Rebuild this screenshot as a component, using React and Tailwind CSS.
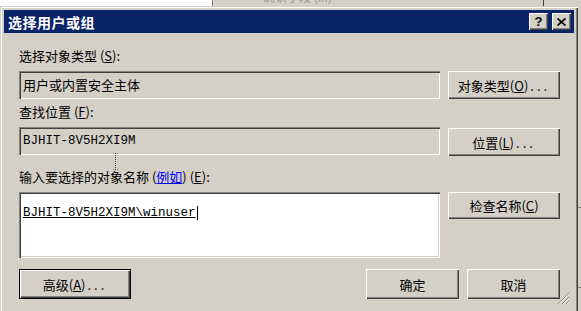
import React from 'react';

const raised =
  'bg-[#d4d0c8] shadow-[inset_1px_1px_0_#ffffff,inset_-1px_-1px_0_#404040,inset_-2px_-2px_0_#808080]';
const sunken =
  'shadow-[inset_1px_1px_0_#808080,inset_2px_2px_0_#404040,inset_-1px_-1px_0_#ffffff,inset_-2px_-2px_0_#d4d0c8]';

const Btn = ({ children, className = '' }) => (
  <button
    className={`${raised} flex items-center justify-center text-[13px] leading-[15px] text-black ${className}`}
  >
    {children}
  </button>
);

const Acc = ({ k }) => (
  <span>
    (<span className="underline">{k}</span>)
  </span>
);

const Dots = () => <span className="tracking-[3px] pl-[2px]">...</span>;

const App = () => {
  return (
    <div className="w-[581px] h-[311px] overflow-hidden bg-[#d4d0c8] font-['Noto_Sans_CJK_SC',sans-serif] text-black select-none">
      {/* window behind the dialog */}
      <div className="flex h-[6px] overflow-hidden">
        <div className="w-[212px] bg-white" />
        <div className="w-px bg-[#808080]" />
        <div className="relative flex-1 bg-[#d4d0c8] overflow-hidden">
          <div className="absolute left-[50px] top-[-10px] text-[12px] leading-[14px] text-[#9a9a9a]">确认字段 (...)</div>
          <div className="absolute left-[330px] top-0 h-full w-px bg-[#404040]" />
        </div>
      </div>

      <div className="flex h-[305px]">
        {/* dialog */}
        <div className="w-[578px] h-[320px] bg-[#d4d0c8] p-[2px] shadow-[inset_1px_1px_0_#d4d0c8,inset_2px_2px_0_#ffffff,inset_-1px_-1px_0_#404040,inset_-2px_-2px_0_#808080]">
          <div className="p-[2px] h-full flex flex-col">
            {/* title bar */}
            <div className="h-[23px] bg-[#0a246a] flex items-center pl-[4px] pr-[3px]">
              <span className="text-white font-bold text-[14px] leading-[16px] tracking-[0.5px]">选择用户或组</span>
              <div className="ml-auto flex gap-[4px]">
                <div className={`${raised} w-[19px] h-[17px] flex items-center justify-center`}>
                  <span className="font-['Liberation_Sans',sans-serif] font-bold text-[13px] leading-none">?</span>
                </div>
                <div className={`${raised} w-[19px] h-[17px] flex items-center justify-center`}>
                  <svg width="9" height="8" viewBox="0 0 9 8">
                    <path d="M0.5 0.5 L8.5 7.5 M8.5 0.5 L0.5 7.5" stroke="#000" strokeWidth="1.8" />
                  </svg>
                </div>
              </div>
            </div>

            {/* body */}
            <div className="relative flex-1 pl-[15px] pt-[15px]">
              <div className="text-[13px] leading-[15px]">
                选择对象类型 <Acc k="S" />:
              </div>
              <div className="mt-[8px] flex gap-[8px]">
                <div className={`${sunken} w-[421px] h-[28px] flex items-center pl-[4px] text-[13px] bg-[#d4d0c8]`}>
                  用户或内置安全主体
                </div>
                <Btn className="w-[112px] h-[28px]">
                  对象类型 <Acc k="O" />
                  <Dots />
                </Btn>
              </div>

              <div className="mt-[5px] text-[13px] leading-[15px]">
                查找位置 <Acc k="F" />:
              </div>
              <div className="mt-[8px] flex gap-[8px]">
                <div className={`${sunken} w-[421px] h-[28px] flex items-center pl-[4px] bg-[#d4d0c8] font-['Liberation_Mono',monospace] text-[12.5px]`}>
                  BJHIT-8V5H2XI9M
                </div>
                <Btn className="w-[112px] h-[28px] mt-px">
                  位置 <Acc k="L" />
                  <Dots />
                </Btn>
              </div>

              <div className="mt-[13px] text-[13px] leading-[15px]">
                输入要选择的对象名称 (<span className="text-[#0000ff] underline">例如</span>) <Acc k="E" />:
              </div>
              <div className="mt-[8px] flex gap-[8px] items-start">
                <div className={`${sunken} w-[421px] h-[66px] bg-white pl-[4px] pt-[5px]`}>
                  <span className="font-['Liberation_Mono',monospace] text-[12.5px] leading-[15px] underline border-r border-black pr-px">
                    BJHIT-8V5H2XI9M\winuser
                  </span>
                </div>
                <Btn className="w-[112px] h-[27px]">
                  检查名称 <Acc k="C" />
                </Btn>
              </div>

              <div className="mt-[11px] flex gap-[8px]">
                <div className="w-[112px] h-[30px] border border-black">
                  <Btn className="w-full h-full">
                    高级 <Acc k="A" />
                    <Dots />
                  </Btn>
                </div>
                <div className="flex-1" />
                <Btn className="w-[93px] h-[30px]">确定</Btn>
                <Btn className="w-[93px] h-[30px] mr-[14px]">取消</Btn>
              </div>

              {/* I-beam mouse cursor */}
              <svg className="absolute left-[109px] top-[120px]" width="5" height="17" viewBox="0 0 5 17">
                <path d="M0 0.5 H5 M0 16.5 H5" stroke="#808080" strokeWidth="1" strokeDasharray="1 1" />
                <path d="M2.5 0 V17" stroke="#404040" strokeWidth="1" strokeDasharray="1 1" />
              </svg>

              {/* resize grip */}
              <svg className="absolute left-[553px] top-[259px]" width="13" height="13" viewBox="0 0 13 13">
                <path d="M12 1 L1 12 M12 5 L5 12 M12 9 L9 12" stroke="#808080" strokeWidth="1" />
                <path d="M12 2 L2 12 M12 6 L6 12 M12 10 L10 12" stroke="#ffffff" strokeWidth="1" />
              </svg>
            </div>
          </div>
        </div>

        {/* window behind, right side */}
        <div className="flex-1 bg-[#d4d0c8] flex flex-col">
          <div className="h-[201px]" />
          <div className="h-px bg-[#808080]" />
          <div className="h-[79px]" />
          <div className="h-px bg-[#808080]" />
        </div>
      </div>
    </div>
  );
};

export default App;
